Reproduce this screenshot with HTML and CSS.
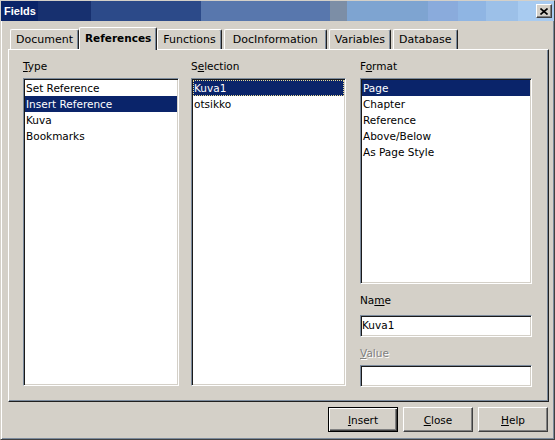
FILE: index.html
```html
<!DOCTYPE html>
<html lang="en">
<head>
    <meta charset="UTF-8">
    <title>Fields</title>
    <link rel="stylesheet" href="styles.css">
</head>
<body>
    <div class="window">
        <div class="titlebar">
            <span class="title">Fields</span>
            <button class="close">
                <svg width="8" height="7" viewBox="0 0 8 7">
                    <path d="M0.5 0.5 L7.5 6.5 M7.5 0.5 L0.5 6.5" stroke="#000" stroke-width="1.6" fill="none"/>
                </svg>
            </button>
        </div>
        <div class="dialog">
            <div class="tabs">
                <div class="tab">Document</div>
                <div class="tab active">References</div>
                <div class="tab">Functions</div>
                <div class="tab wide">DocInformation</div>
                <div class="tab">Variables</div>
                <div class="tab">Database</div>
            </div>
            <div class="panel">
                <div class="col col-type">
                    <div class="label"><u>T</u>ype</div>
                    <ul class="list tall">
                        <li>Set Reference</li>
                        <li class="selected">Insert Reference</li>
                        <li>Kuva</li>
                        <li>Bookmarks</li>
                    </ul>
                </div>
                <div class="col col-sel">
                    <div class="label">S<u>e</u>lection</div>
                    <ul class="list tall">
                        <li class="selected focus">Kuva1</li>
                        <li>otsikko</li>
                    </ul>
                </div>
                <div class="col col-format">
                    <div class="label">F<u>o</u>rmat</div>
                    <ul class="list short">
                        <li class="selected">Page</li>
                        <li>Chapter</li>
                        <li>Reference</li>
                        <li>Above/Below</li>
                        <li>As Page Style</li>
                    </ul>
                    <div class="label name">Na<u>m</u>e</div>
                    <div class="field">Kuva1</div>
                    <div class="label value disabled"><u>V</u>alue</div>
                    <div class="field value-field"></div>
                </div>
            </div>
            <div class="buttons">
                <button class="btn default"><u>I</u>nsert</button>
                <button class="btn"><u>C</u>lose</button>
                <button class="btn"><u>H</u>elp</button>
            </div>
        </div>
    </div>
</body>
</html>
```

FILE: styles.css
```css
* {
    margin: 0;
    padding: 0;
    box-sizing: border-box;
}

body {
    background: #d4d0c8;
    font-family: "DejaVu Sans", sans-serif;
    font-size: 10.5px;
    color: #000;
}

.window {
    width: 555px;
    height: 440px;
    background: #d4d0c8;
    border: 1px solid;
    border-color: #d4d0c8 #404040 #404040 #d4d0c8;
    box-shadow: inset 1px 1px 0 #fff, inset -1px -1px 0 #7b8a9c;
}

/* title bar */
.titlebar {
    height: 20px;
    display: flex;
    align-items: center;
    justify-content: space-between;
    padding: 0 2px 0 3px;
    background: linear-gradient(to right,
        #0a2468 0, #0a2468 37px,
        #17306f 37px, #17306f 90px,
        #2c4a89 90px, #2c4a89 200px,
        #5877ad 200px, #5877ad 329px,
        #7c8ea6 329px, #7c8ea6 346px,
        #7ea4d1 346px, #7ea4d1 427px,
        #8aabdc 427px, #8aabdc 457px,
        #8fb5e3 457px, #8fb5e3 485px,
        #9cc0e8 485px, #9cc0e8 517px,
        #a8cbf0 517px);
}

.title {
    color: #fff;
    font-family: "Liberation Sans", sans-serif;
    font-weight: bold;
    font-size: 11px;
}

.close {
    width: 16px;
    height: 14px;
    display: flex;
    align-items: center;
    justify-content: center;
    background: #d4d0c8;
    border: 1px solid;
    border-color: #fff #404040 #404040 #fff;
    box-shadow: inset -1px -1px 0 #808080;
}

/* dialog body */
.dialog {
    padding: 6px 5px 0 7px;
}

.tabs {
    display: flex;
    align-items: flex-end;
    height: 22px;
    padding-left: 2px;
}

.tab {
    height: 20px;
    line-height: 20px;
    padding: 0 5px;
    margin-right: 2px;
    font-size: 11px;
    background: #d4d0c8;
    border-top: 1px solid #fff;
    border-left: 1px solid #fff;
    border-right: 1px solid #202020;
    box-shadow: inset -1px 0 0 #7b8a9c;
    border-radius: 2px 2px 0 0;
    white-space: nowrap;
}

.tab.wide {
    padding: 0 8px;
}

.tab.active {
    height: 23px;
    margin: 0 0 -1px -2px;
    padding: 0 5px;
    font-size: 10.5px;
    font-weight: bold;
    line-height: 21px;
    z-index: 1;
}

.tab.active + .tab {
    margin-left: 0;
}

.panel {
    height: 353px;
    display: flex;
    padding: 8px 14px 0 14px;
    border: 1px solid;
    border-color: #fff #202020 #202020 #fff;
    box-shadow: inset -1px -1px 0 #7b8a9c;
}

.col-type {
    width: 156px;
}

.col-sel {
    width: 155px;
    margin-left: 12px;
}

.col-format {
    width: 172px;
    margin-left: 14px;
}

.label {
    height: 16px;
    line-height: 16px;
    margin-bottom: 4px;
    white-space: nowrap;
}

.label.name {
    margin-top: 8px;
    margin-bottom: 7px;
}

.label.value {
    margin-top: 8px;
    margin-bottom: 4px;
}

.disabled {
    color: #808080;
    text-shadow: 1px 1px 0 #fff;
}

.list {
    list-style: none;
    background: #fff;
    padding: 1px;
    border: 1px solid;
    border-color: #7b8a9c #fff #fff #7b8a9c;
    box-shadow: inset 1px 1px 0 #1a1a1a, inset -1px -1px 0 #d4d0c8;
}

.list.tall {
    height: 308px;
}

.list.short {
    height: 206px;
}

.list li {
    height: 16px;
    line-height: 16px;
    padding-left: 1px;
    white-space: nowrap;
}

.list li.selected {
    background: #0a246a;
    color: #fff;
}

.list li.focus {
    outline: 1px dotted #e8dc96;
    outline-offset: -1px;
}

.field {
    height: 22px;
    line-height: 18px;
    padding-left: 1px;
    background: #fff;
    border: 1px solid;
    border-color: #7b8a9c #fff #fff #7b8a9c;
    box-shadow: inset 1px 1px 0 #1a1a1a, inset -1px -1px 0 #d4d0c8;
}

/* bottom buttons */
.buttons {
    display: flex;
    justify-content: flex-end;
    gap: 5px;
    margin-top: 5px;
    padding-right: 1px;
}

.btn {
    width: 70px;
    height: 25px;
    font-family: "DejaVu Sans", sans-serif;
    font-size: 10.5px;
    color: #000;
    background: #d4d0c8;
    border: 1px solid;
    border-color: #fff #404040 #404040 #fff;
    box-shadow: inset -1px -1px 0 #808080;
}

.btn.default {
    border-color: #000;
    box-shadow: inset 1px 1px 0 #fff, inset -1px -1px 0 #404040, inset -2px -2px 0 #808080;
}
```
